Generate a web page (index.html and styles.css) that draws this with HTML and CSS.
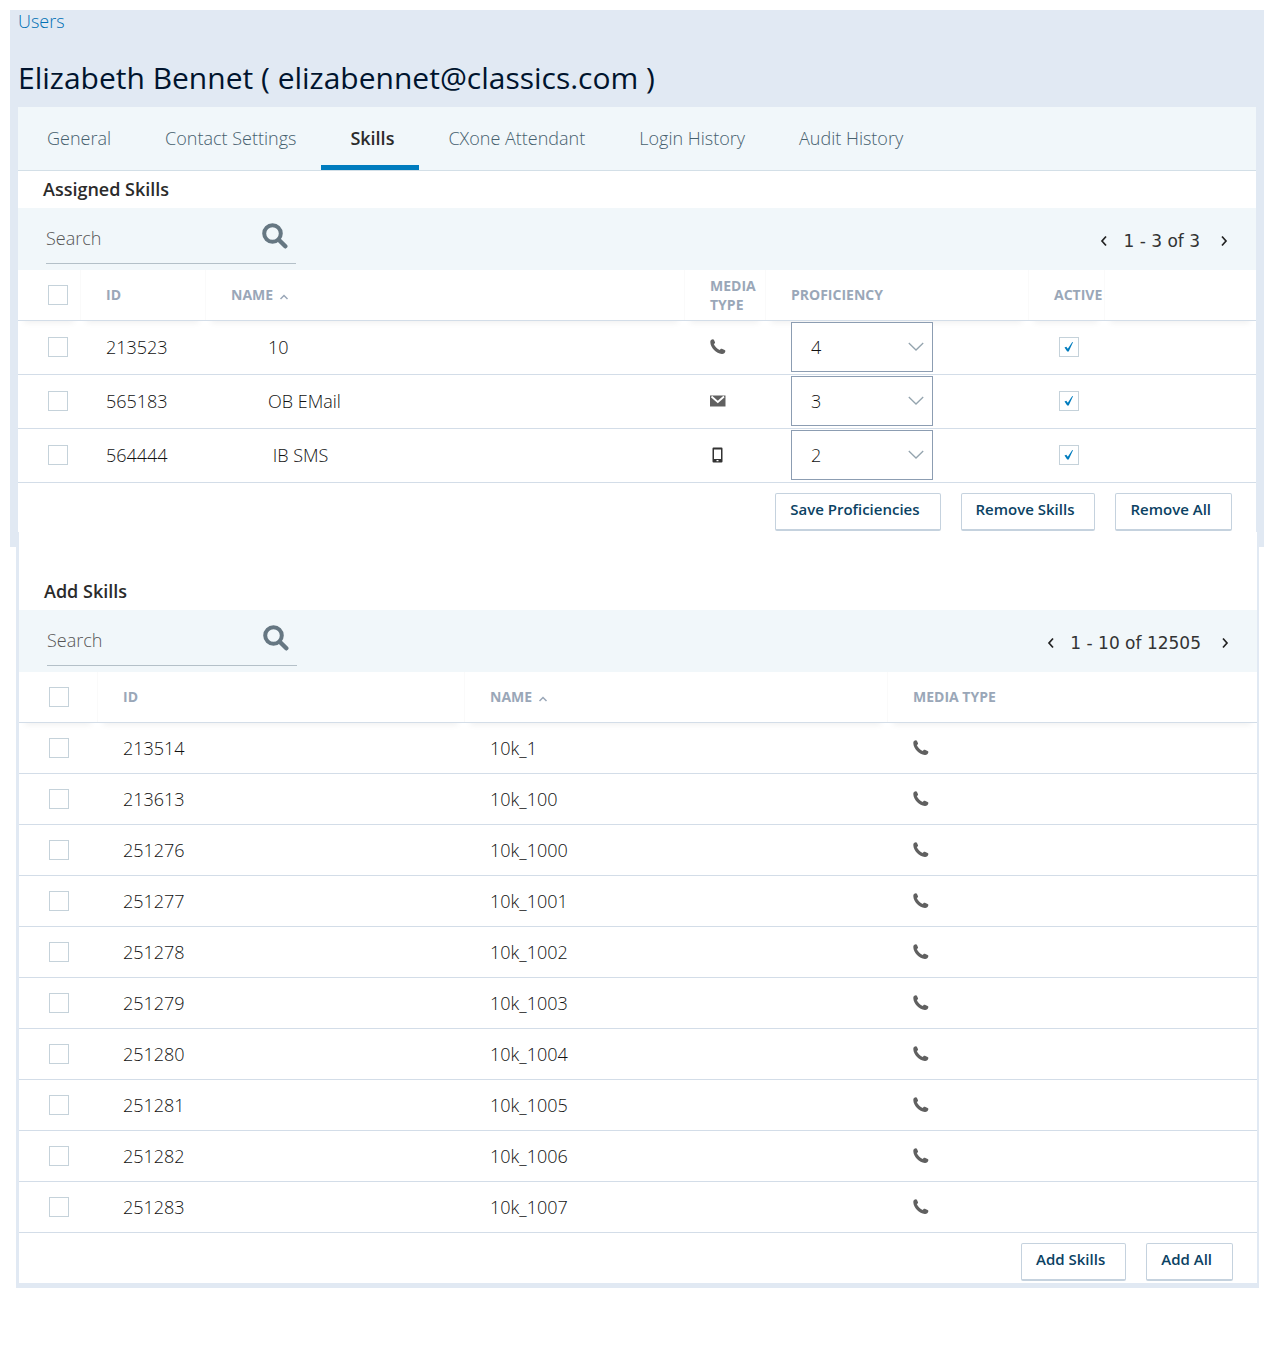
FILE: index.html
```html
<!DOCTYPE html>
<html lang="en">
<head>
    <meta charset="UTF-8">
    <meta name="viewport" content="width=device-width, initial-scale=1.0">
    <title>User Skills</title>
    <link rel="stylesheet" href="styles.css">
</head>
<body>
    <svg class="sprite" aria-hidden="true">
        <symbol id="icon-search" viewBox="0 0 26 26">
            <circle cx="10.5" cy="10.5" r="8.3" fill="none" stroke="currentColor" stroke-width="4"/>
            <path d="M17 17l6.3 6.3" stroke="currentColor" stroke-width="4.4" stroke-linecap="round"/>
        </symbol>
        <symbol id="icon-phone" viewBox="0 0 16 16">
            <path d="M.3 3C.3 1.400 1.500.4 2.900.3c.5 0 .9.3 1.100.7l1 2.200c.2.500 0 1-.4 1.200l-.8.500c.9 2.300 3.400 5 6 6.100l.8-.9c.3-.4.8-.5 1.300-.3l2.700 1.200c.6.3.9.8.7 1.400-.4 1.500-1.600 2.700-3.500 2.500C6.300 14.700.5 8.700.3 3z" fill="currentColor"/>
        </symbol>
        <symbol id="icon-mail" viewBox="0 0 16 16">
            <path d="M0 2.500h15.500v11H0z" fill="currentColor"/>
            <path d="M1.500 3.500L7.800 9l6.200-5.500" fill="none" stroke="#fff" stroke-width="1.800"/>
        </symbol>
        <symbol id="icon-mobile" viewBox="0 0 16 16">
            <path fill-rule="evenodd" d="M3.500.5h8a1 1 0 0 1 1 1v13a1 1 0 0 1-1 1h-8a1 1 0 0 1-1-1v-13a1 1 0 0 1 1-1zM4 2.500v9.500h7V2.500zM6.500 13v1.300h2V13z" fill="#333"/>
        </symbol>
        <symbol id="icon-left" viewBox="0 0 8 12">
            <path d="M6 1.500L2 6l4 4.500" fill="none" stroke="currentColor" stroke-width="1.700"/>
        </symbol>
        <symbol id="icon-right" viewBox="0 0 8 12">
            <path d="M2 1.500L6 6l-4 4.500" fill="none" stroke="currentColor" stroke-width="1.700"/>
        </symbol>
        <symbol id="icon-sort" viewBox="0 0 10 6">
            <path d="M1.500 5L5 1.500 8.500 5" fill="none" stroke="currentColor" stroke-width="1.500"/>
        </symbol>
    </svg>

    <div class="user-panel">
        <a href="#" class="breadcrumb">Users</a>
        <h1>Elizabeth Bennet ( elizabennet@classics.com )</h1>

        <div class="card">
            <nav class="tabs">
                <a href="#" class="tab">General</a>
                <a href="#" class="tab">Contact Settings</a>
                <a href="#" class="tab active">Skills</a>
                <a href="#" class="tab">CXone Attendant</a>
                <a href="#" class="tab">Login History</a>
                <a href="#" class="tab">Audit History</a>
            </nav>

            <h2>Assigned Skills</h2>
            <div class="toolbar">
                <div class="search">
                    <input type="text" placeholder="Search" aria-label="Search assigned skills">
                    <button type="button" class="icon-button" aria-label="Search"><svg class="search-icon"><use href="#icon-search"/></svg></button>
                </div>
                <div class="pager">
                    <button type="button" class="icon-button" aria-label="Previous page"><svg class="arrow"><use href="#icon-left"/></svg></button>
                    <span class="range">1 - 3 of 3</span>
                    <button type="button" class="icon-button" aria-label="Next page"><svg class="arrow"><use href="#icon-right"/></svg></button>
                </div>
            </div>

            <table class="assigned">
                <colgroup>
                    <col class="col-check">
                    <col class="col-id">
                    <col>
                    <col class="col-media">
                    <col class="col-proficiency">
                    <col class="col-active">
                    <col class="col-end">
                </colgroup>
                <thead>
                    <tr>
                        <th><input type="checkbox" aria-label="Select all assigned skills"></th>
                        <th>ID</th>
                        <th>NAME <svg class="sort"><use href="#icon-sort"/></svg></th>
                        <th>MEDIA TYPE</th>
                        <th>PROFICIENCY</th>
                        <th>ACTIVE</th>
                        <th></th>
                    </tr>
                </thead>
                <tbody>
                    <tr>
                        <td><input type="checkbox" aria-label="Select 213523"></td>
                        <td>213523</td>
                        <td class="skill-name">10</td>
                        <td><svg class="media"><use href="#icon-phone"/></svg></td>
                        <td><select aria-label="Proficiency"><option>1</option><option>2</option><option>3</option><option selected>4</option></select></td>
                        <td class="active-cell"><input type="checkbox" aria-label="Active" checked></td>
                        <td></td>
                    </tr>
                    <tr>
                        <td><input type="checkbox" aria-label="Select 565183"></td>
                        <td>565183</td>
                        <td class="skill-name">OB EMail</td>
                        <td><svg class="media"><use href="#icon-mail"/></svg></td>
                        <td><select aria-label="Proficiency"><option>1</option><option>2</option><option selected>3</option><option>4</option></select></td>
                        <td class="active-cell"><input type="checkbox" aria-label="Active" checked></td>
                        <td></td>
                    </tr>
                    <tr>
                        <td><input type="checkbox" aria-label="Select 564444"></td>
                        <td>564444</td>
                        <td class="skill-name">&nbsp;IB SMS</td>
                        <td><svg class="media"><use href="#icon-mobile"/></svg></td>
                        <td><select aria-label="Proficiency"><option>1</option><option selected>2</option><option>3</option><option>4</option></select></td>
                        <td class="active-cell"><input type="checkbox" aria-label="Active" checked></td>
                        <td></td>
                    </tr>
                </tbody>
            </table>

            <div class="actions">
                <button type="button" class="btn">Save Proficiencies</button>
                <button type="button" class="btn">Remove Skills</button>
                <button type="button" class="btn">Remove All</button>
            </div>
        </div>
    </div>

    <div class="add-panel">
        <h2>Add Skills</h2>
        <div class="toolbar">
            <div class="search">
                <input type="text" placeholder="Search" aria-label="Search available skills">
                <button type="button" class="icon-button" aria-label="Search"><svg class="search-icon"><use href="#icon-search"/></svg></button>
            </div>
            <div class="pager">
                <button type="button" class="icon-button" aria-label="Previous page"><svg class="arrow"><use href="#icon-left"/></svg></button>
                <span class="range">1 - 10 of 12505</span>
                <button type="button" class="icon-button" aria-label="Next page"><svg class="arrow"><use href="#icon-right"/></svg></button>
            </div>
        </div>

        <table class="available">
            <colgroup>
                <col class="col-check">
                <col class="col-id">
                <col class="col-name">
                <col>
            </colgroup>
            <thead>
                <tr>
                    <th><input type="checkbox" aria-label="Select all skills"></th>
                    <th>ID</th>
                    <th>NAME <svg class="sort"><use href="#icon-sort"/></svg></th>
                    <th>MEDIA TYPE</th>
                </tr>
            </thead>
            <tbody>
                <tr>
                    <td><input type="checkbox" aria-label="Select 213514"></td>
                    <td>213514</td>
                    <td>10k_1</td>
                    <td><svg class="media"><use href="#icon-phone"/></svg></td>
                </tr>
                <tr>
                    <td><input type="checkbox" aria-label="Select 213613"></td>
                    <td>213613</td>
                    <td>10k_100</td>
                    <td><svg class="media"><use href="#icon-phone"/></svg></td>
                </tr>
                <tr>
                    <td><input type="checkbox" aria-label="Select 251276"></td>
                    <td>251276</td>
                    <td>10k_1000</td>
                    <td><svg class="media"><use href="#icon-phone"/></svg></td>
                </tr>
                <tr>
                    <td><input type="checkbox" aria-label="Select 251277"></td>
                    <td>251277</td>
                    <td>10k_1001</td>
                    <td><svg class="media"><use href="#icon-phone"/></svg></td>
                </tr>
                <tr>
                    <td><input type="checkbox" aria-label="Select 251278"></td>
                    <td>251278</td>
                    <td>10k_1002</td>
                    <td><svg class="media"><use href="#icon-phone"/></svg></td>
                </tr>
                <tr>
                    <td><input type="checkbox" aria-label="Select 251279"></td>
                    <td>251279</td>
                    <td>10k_1003</td>
                    <td><svg class="media"><use href="#icon-phone"/></svg></td>
                </tr>
                <tr>
                    <td><input type="checkbox" aria-label="Select 251280"></td>
                    <td>251280</td>
                    <td>10k_1004</td>
                    <td><svg class="media"><use href="#icon-phone"/></svg></td>
                </tr>
                <tr>
                    <td><input type="checkbox" aria-label="Select 251281"></td>
                    <td>251281</td>
                    <td>10k_1005</td>
                    <td><svg class="media"><use href="#icon-phone"/></svg></td>
                </tr>
                <tr>
                    <td><input type="checkbox" aria-label="Select 251282"></td>
                    <td>251282</td>
                    <td>10k_1006</td>
                    <td><svg class="media"><use href="#icon-phone"/></svg></td>
                </tr>
                <tr>
                    <td><input type="checkbox" aria-label="Select 251283"></td>
                    <td>251283</td>
                    <td>10k_1007</td>
                    <td><svg class="media"><use href="#icon-phone"/></svg></td>
                </tr>
            </tbody>
        </table>

        <div class="actions">
            <button type="button" class="btn">Add Skills</button>
            <button type="button" class="btn">Add All</button>
        </div>
    </div>
</body>
</html>
```

FILE: styles.css
```css
* {
    box-sizing: border-box;
}

body {
    margin: 10px 12px 0 10px;
    font-family: "Open Sans", "Noto Sans", sans-serif;
    font-size: 18px;
    font-weight: 300;
    line-height: 24px;
    color: #111;
    background-color: #fff;
}

.sprite {
    display: none;
}

.user-panel {
    background-color: #e1e9f3;
    padding: 0 8px 15px;
}

.breadcrumb {
    display: block;
    line-height: 22px;
    color: #0070b4;
    text-decoration: none;
}

h1 {
    margin: 0;
    padding: 26px 0 9px;
    font-size: 30px;
    font-weight: 400;
    line-height: 40px;
    color: #00142e;
}

.card {
    background-color: #fff;
}

.tabs {
    display: flex;
    height: 64px;
    background-color: #f1f7fa;
    border-bottom: 1px solid #d3dfe7;
}

.tab {
    padding: 19px 25px 0 29px;
    color: #46606e;
    text-decoration: none;
    border-bottom: 5px solid transparent;
}

.tab.active {
    color: #2b2b2b;
    font-weight: 600;
    border-bottom-color: #007cbe;
}

h2 {
    margin: 0;
    padding: 6px 25px 7px;
    font-size: 18px;
    font-weight: 600;
    line-height: 24px;
    color: #2b2b2b;
}

.toolbar {
    display: flex;
    justify-content: space-between;
    height: 62px;
    padding: 0 28px;
    background-color: #f1f7fa;
}

.search {
    display: flex;
    align-items: center;
    width: 250px;
    height: 56px;
    border-bottom: 1px solid #b4c0c8;
}

.search input {
    flex: 1;
    min-width: 0;
    padding: 4px 0 0;
    font: inherit;
    border: none;
    outline: none;
    background: none;
}

.search input::placeholder {
    color: #555;
}

.search .icon-button {
    margin-right: 8px;
}

.icon-button {
    display: flex;
    padding: 0;
    color: #222;
    background: none;
    border: none;
    cursor: pointer;
}

.search-icon {
    width: 26px;
    height: 26px;
    color: #667782;
}

.pager {
    display: flex;
    align-items: center;
    height: 66px;
}

.range {
    padding: 0 20px 0 15px;
    font-family: "DejaVu Sans", sans-serif;
    font-size: 17px;
    font-weight: 400;
    color: #333;
}

.arrow {
    width: 8px;
    height: 12px;
}

table {
    width: 100%;
    table-layout: fixed;
    border-collapse: separate;
    border-spacing: 0;
}

th {
    height: 51px;
    padding: 0 0 1px 26px;
    font-size: 14px;
    font-weight: 700;
    line-height: 19px;
    text-align: left;
    color: #9aa7b8;
    border-bottom: 1px solid #d3dde8;
    box-shadow: inset 1px 0 0 #fafafa, 0 8px 6px -6px rgba(0, 0, 0, 0.06);
}

td {
    height: 51px;
    padding: 0 0 0 26px;
    border-bottom: 1px solid #d3dde8;
}

.assigned td {
    height: 54px;
    padding-bottom: 1px;
}

th:first-child,
td:first-child {
    padding-left: 30px;
}

th:first-child {
    padding-bottom: 0;
    box-shadow: 0 8px 6px -6px rgba(0, 0, 0, 0.06);
}

.assigned .col-check { width: 62px; }
.assigned .col-id { width: 125px; }
.assigned .col-media { width: 81px; }
.assigned .col-proficiency { width: 263px; }
.assigned .col-active { width: 76px; }
.assigned .col-end { width: 152px; }

.available .col-check { width: 78px; }
.available .col-id { width: 367px; }
.available .col-name { width: 423px; }

.assigned .skill-name {
    padding-left: 63px;
}

.assigned .active-cell {
    padding-left: 31px;
}

.sort {
    width: 10px;
    height: 6px;
    margin-left: 2px;
}

.media {
    display: block;
    width: 16px;
    height: 16px;
    color: #606060;
}

input[type="checkbox"] {
    display: block;
    appearance: none;
    width: 20px;
    height: 20px;
    margin: 0;
    border: 1px solid #c5d2da;
    background-color: #fff;
}

input[type="checkbox"]:checked {
    background: #fff url("data:image/svg+xml,%3Csvg xmlns='http://www.w3.org/2000/svg' viewBox='0 0 18 18'%3E%3Cpath d='M4.500 9.500l1.800-.8 1.500 2L12.300 4l.7.3L8.700 13.500H7.200z' fill='%23007cbe'/%3E%3C/svg%3E") center / 18px no-repeat;
}

select {
    display: block;
    appearance: none;
    width: 142px;
    height: 50px;
    padding: 0 19px;
    font: inherit;
    color: #111;
    border: 1px solid #8c9db2;
    border-radius: 0;
    background: #fff url("data:image/svg+xml,%3Csvg xmlns='http://www.w3.org/2000/svg' viewBox='0 0 16 10'%3E%3Cpath d='M.8 1L8 8l7.200-7' fill='none' stroke='%2394a4ae' stroke-width='1.300'/%3E%3C/svg%3E") right 8px center / 16px 10px no-repeat;
}

.actions {
    display: flex;
    justify-content: flex-end;
    gap: 20px;
    padding: 10px 24px 1px;
}

.btn {
    height: 38px;
    padding: 0 20px 6px 14px;
    font-family: inherit;
    font-size: 15px;
    font-weight: 600;
    color: #0b4263;
    background-color: #fff;
    border: 1px solid #c5d2de;
    border-bottom-width: 2px;
    border-radius: 2px;
    cursor: pointer;
}

/* slides up over the bottom edge of the user panel */
.add-panel {
    position: relative;
    margin: -15px 5px 58px 6px;
    background-color: #fff;
    border: solid #e1e9f3;
    border-width: 0 2px 5px 3px;
}

.add-panel h2 {
    padding-top: 47px;
}

.add-panel .actions {
    padding-bottom: 2px;
}
```
